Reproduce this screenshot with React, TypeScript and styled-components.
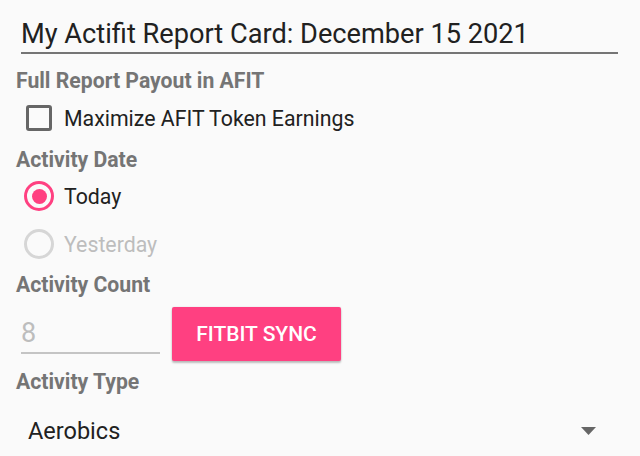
import React from "react";
import styled, { createGlobalStyle } from "styled-components";

const GlobalStyle = createGlobalStyle`
  body {
    margin: 0;
    background: #fafafa;
    font-family: Roboto, "Liberation Sans", sans-serif;
  }
`;

const Page = styled.div`
  display: flex;
  flex-direction: column;
  padding: 19px 22px 0 16px;
`;

const TitleField = styled.div`
  margin-left: 5px;
  font-size: 27.2px;
  line-height: 30px;
  color: #212121;
  padding-bottom: 3px;
  border-bottom: 2px solid #757575;
`;

const SectionLabel = styled.div<{ $top: number }>`
  margin-top: ${(p) => p.$top}px;
  font-size: 21.2px;
  font-weight: 700;
  line-height: 24px;
  color: #757575;
`;

const OptionRow = styled.div<{ $h: number; $disabled?: boolean }>`
  display: flex;
  align-items: center;
  gap: 11px;
  height: ${(p) => p.$h}px;
  font-size: 21.3px;
  color: ${(p) => (p.$disabled ? "#bdbdbd" : "#212121")};
`;

const CheckBox = styled.span`
  box-sizing: border-box;
  width: 26px;
  height: 26px;
  margin-left: 10px;
  margin-right: 1px;
  border: 3px solid #666;
  border-radius: 3px;
`;

const RadioCircle = styled.span<{ $on?: boolean }>`
  box-sizing: border-box;
  display: flex;
  align-items: center;
  justify-content: center;
  width: 30px;
  height: 30px;
  margin-left: 8px;
  margin-right: -1px;
  border-radius: 50%;
  border: 3px solid ${(p) => (p.$on ? "#ff4081" : "#d6d6d6")};

  &::after {
    content: "";
    display: ${(p) => (p.$on ? "block" : "none")};
    width: 15px;
    height: 15px;
    border-radius: 50%;
    background: #ff4081;
  }
`;

const CountRow = styled.div`
  display: flex;
  align-items: flex-start;
  margin-top: 10px;
`;

const CountInput = styled.div`
  width: 139px;
  height: 35px;
  margin-left: 5px;
  padding-top: 10px;
  font-size: 27px;
  line-height: 32px;
  color: #bdbdbd;
  border-bottom: 2px solid #c4c4c4;
`;

const SyncButton = styled.button`
  width: 169px;
  height: 54px;
  margin-left: 12px;
  border: none;
  border-radius: 2px;
  background: #ff4081;
  color: #fff;
  font-family: Roboto, "Liberation Sans", sans-serif;
  font-size: 21px;
  font-weight: 500;
  box-shadow: 0 2px 2px rgba(0, 0, 0, 0.24), 0 0 2px rgba(0, 0, 0, 0.12);
`;

const SelectRow = styled.div`
  display: flex;
  align-items: center;
  justify-content: space-between;
  margin-top: 24px;
  padding-left: 12px;
  font-size: 23.5px;
  line-height: 26px;
  color: #212121;
`;

const Caret = styled.svg`
  width: 15px;
  height: 8px;
  margin-right: 22px;
`;

export default function App() {
  return (
    <>
      <GlobalStyle />
      <Page>
        <TitleField>My Actifit Report Card: December 15 2021</TitleField>

        <SectionLabel $top={15}>Full Report Payout in AFIT</SectionLabel>
        <OptionRow $h={40} style={{ marginTop: 5 }}>
          <CheckBox />
          Maximize AFIT Token Earnings
        </OptionRow>

        <SectionLabel $top={10}>Activity Date</SectionLabel>
        <OptionRow $h={48}>
          <RadioCircle $on />
          Today
        </OptionRow>
        <OptionRow $h={48} $disabled>
          <RadioCircle />
          Yesterday
        </OptionRow>

        <SectionLabel $top={5}>Activity Count</SectionLabel>
        <CountRow>
          <CountInput>8</CountInput>
          <SyncButton>FITBIT SYNC</SyncButton>
        </CountRow>

        <SectionLabel $top={9}>Activity Type</SectionLabel>
        <SelectRow>
          Aerobics
          <Caret viewBox="0 0 15 8">
            <polygon points="0,0 15,0 7.5,8" fill="#666" />
          </Caret>
        </SelectRow>
      </Page>
    </>
  );
}
